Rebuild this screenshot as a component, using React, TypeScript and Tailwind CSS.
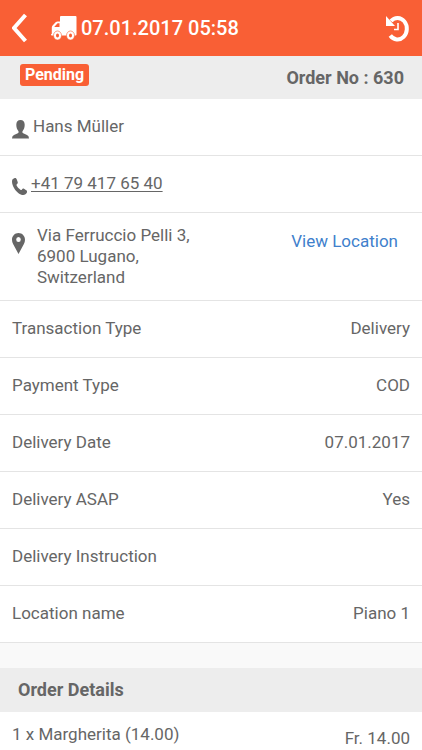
import type { ReactNode } from 'react';

const details = [
  { label: 'Transaction Type', value: 'Delivery' },
  { label: 'Payment Type', value: 'COD' },
  { label: 'Delivery Date', value: '07.01.2017' },
  { label: 'Delivery ASAP', value: 'Yes' },
  { label: 'Delivery Instruction', value: '' },
  { label: 'Location name', value: 'Piano 1' },
];

const items = [{ name: '1 x Margherita (14.00)', price: 'Fr. 14.00' }];

export default function App() {
  return (
    <div className="min-h-screen bg-[#f9f9f9] font-['Roboto',sans-serif] text-[17px] leading-7 text-[#666]">
      <header className="flex h-14 items-center bg-[#f95f35] px-3 text-white">
        <button type="button" aria-label="Back" className="shrink-0">
          <BackIcon />
        </button>
        <TruckIcon />
        <h1 className="ml-1 flex-1 text-xl leading-7 font-medium">07.01.2017 05:58</h1>
        <button type="button" aria-label="Order history" className="shrink-0">
          <HistoryIcon />
        </button>
      </header>

      <main>
        <div className="flex h-[43px] items-start justify-between bg-[#ededed] pr-[18px] pl-5">
          <span className="mt-2 rounded-[3px] bg-[#f95f35] px-[5px] text-base leading-[22px] font-bold text-white">
            Pending
          </span>
          <span className="self-center text-lg leading-7 font-bold">Order No : 630</span>
        </div>

        {/* Customer */}
        <section className="bg-white">
          <Row>
            <div className="flex items-center gap-1">
              <UserIcon />
              <span>Hans Müller</span>
            </div>
          </Row>
          <Row>
            <div className="flex items-center gap-1">
              <PhoneIcon />
              <a href="tel:+41794176540" className="underline underline-offset-2">
                +41 79 417 65 40
              </a>
            </div>
          </Row>
          <div className="flex h-22 items-start border-b border-[#e4e4e4] px-3 pt-3">
            <PinIcon />
            <address className="ml-3 flex-1 leading-[21px] not-italic">
              Via Ferruccio Pelli 3,
              <br />
              6900 Lugano,
              <br />
              Switzerland
            </address>
            <a href="#location" className="mt-0.5 mr-3 text-[#4080cc]">
              View Location
            </a>
          </div>
        </section>

        <dl className="bg-white">
          {details.map(({ label, value }) => (
            <Row key={label}>
              <dt>{label}</dt>
              <dd>{value}</dd>
            </Row>
          ))}
        </dl>

        <h2 className="mt-[25px] bg-[#ededed] px-[18px] py-2 text-lg leading-7 font-bold">Order Details</h2>
        <ul className="bg-white">
          {items.map((item) => (
            <li key={item.name} className="flex justify-between px-3 pt-2">
              <span>{item.name}</span>
              <span className="mt-1">{item.price}</span>
            </li>
          ))}
        </ul>
      </main>
    </div>
  );
}

function Row({ children }: { children: ReactNode }) {
  return (
    <div className="flex h-[57px] items-center justify-between border-b border-[#e4e4e4] px-3 pb-0.5">
      {children}
    </div>
  );
}

function BackIcon() {
  return (
    <svg width="16" height="30" viewBox="0 0 16 30" fill="none" stroke="currentColor" strokeWidth="4">
      <path d="M13.500 2 2 15 13.500 28" />
    </svg>
  );
}

function TruckIcon() {
  return (
    <svg width="26" height="25" viewBox="0 0 26 25" className="ml-[23px] shrink-0" fill="currentColor">
      <path
        fillRule="evenodd"
        d="M10 0h14.500Q25.500 0 25.500 1v17.500q0 1-1 1H.8Q0 19.500 0 18.300l.8-.6v-6.200q0-1.200.8-2l3-3.200q.8-.8 2-.8H9V1q0-1 1-1ZM6.600 7.300 3.400 10.700V11H8.500V7.300H6.600Z"
      />
      <g stroke="#f95f35" strokeWidth="0.6">
        <ellipse cx="6.500" cy="19.500" rx="4" ry="4.500" />
        <ellipse cx="19.500" cy="19.500" rx="4" ry="4.500" />
      </g>
      <ellipse cx="6.500" cy="19.500" rx="1.500" ry="1.900" fill="#f95f35" />
      <ellipse cx="19.500" cy="19.500" rx="1.500" ry="1.900" fill="#f95f35" />
    </svg>
  );
}

function HistoryIcon() {
  return (
    <svg width="24" height="28" viewBox="0 0 24 28" fill="none" stroke="currentColor">
      <path d="M5 7A9.300 10.800 0 1 1 4.300 21.500" strokeWidth="4" />
      <path d="M0 2v10h9Z" fill="currentColor" stroke="none" />
      <path d="M12 9v6.500H8" strokeWidth="1.600" />
    </svg>
  );
}

function UserIcon() {
  return (
    <svg width="17" height="19" viewBox="0 0 17 19" className="mt-1.5" fill="currentColor">
      <path d="M8.500 0C5.800 0 4.300 1.800 4.300 4.700c0 2.500.7 4.600 1.900 6 .7.900.6 2-.4 2.500L2 15Q0 15.900 0 18.500h17Q17 15.900 15 15l-3.800-1.800c-1-.5-1.100-1.600-.4-2.500 1.200-1.400 1.900-3.500 1.900-6C12.700 1.800 11.200 0 8.500 0Z" />
    </svg>
  );
}

function PhoneIcon() {
  return (
    <svg width="15" height="17" viewBox="0 0 15 17" className="mt-1.5" fill="currentColor">
      <path d="M2.300.2C3.800-.2 4.400.4 4.800 1.600l.8 2.200c.4 1 .2 1.500-.6 2.200-.6.600-.6 1.100-.2 1.800.9 1.700 2 2.900 3.600 3.900.7.500 1.100.4 1.600-.3.600-.9 1.100-1.100 2-.6l2.200 1.400c1 .7 1.200 1.100.7 2.400-.6 1.600-2 2.300-3.600 2.300C8 16.900 4.800 14.200 2.600 10.900.9 8.200 0 5.600 0 3.500 0 1.600.9.700 2.300.2Z" />
    </svg>
  );
}

function PinIcon() {
  return (
    <svg width="13" height="21" viewBox="0 0 13 21" className="mt-2" fill="currentColor">
      <path
        fillRule="evenodd"
        d="M6.500 0C2.900 0 0 2.900 0 6.700 0 8.300.4 9.600 1.100 11l5.400 10 5.400-10c.7-1.400 1.100-2.700 1.100-4.300C13 2.900 10.100 0 6.500 0Zm0 4.100a2.300 2.500 0 1 1 0 5 2.300 2.500 0 0 1 0-5Z"
      />
    </svg>
  );
}
